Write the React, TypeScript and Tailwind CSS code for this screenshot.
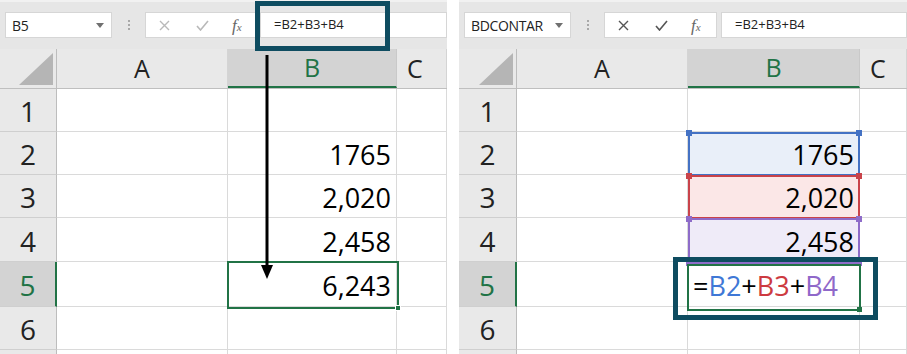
const FONT = "font-['Open_Sans','Noto_Sans',sans-serif]"

type Row = { n: number; h: string; v: string; label: string }

const rows: Row[] = [
  { n: 1, h: 'h-[43px]', v: '', label: '1' },
  { n: 2, h: 'h-[43px]', v: '1765', label: '2' },
  { n: 3, h: 'h-[43px]', v: '2,020', label: '3' },
  { n: 4, h: 'h-[44px]', v: '2,458', label: '4' },
  { n: 5, h: 'h-[45px]', v: '6,243', label: '5' },
  { n: 6, h: 'h-[43px]', v: '', label: '6' },
  // row 7 is only a sliver at the bottom edge
  { n: 7, h: 'h-[43px]', v: '', label: '' },
]

// fill colours of the referenced ranges (right panel only)
const rangeFill: Record<number, string> = {
  2: 'bg-[#e9eff9]',
  3: 'bg-[#fbe7e7]',
  4: 'bg-[#efebf8]',
}

function FormulaBar({ name, editing, nameW, btnW }: { name: string; editing: boolean; nameW: string; btnW: string }) {
  const iconColor = editing ? '#555555' : '#b9b9b9'
  return (
    <div className="h-[49px] bg-[#e6e6e6] border-t-2 border-[#f1f1f1] flex items-start pt-[10px] pl-[5px]">
      {/* name box */}
      <div className={`${nameW} h-[26px] bg-white border border-[#d6d6d6] flex items-center justify-between pl-[6px] pr-[7px]`}>
        <span className="text-[14px] text-[#222] tracking-tight">{name}</span>
        <svg width="8" height="5" viewBox="0 0 8 5">
          <polygon points="0,0 8,0 4,5" fill="#707070" />
        </svg>
      </div>
      <div className="w-[33px] h-[26px] flex flex-col items-center justify-center gap-[2px]">
        <div className="w-[2px] h-[2px] bg-[#a8a8a8]" />
        <div className="w-[2px] h-[2px] bg-[#a8a8a8]" />
        <div className="w-[2px] h-[2px] bg-[#a8a8a8]" />
      </div>
      {/* cancel / enter / fx */}
      <div className={`${btnW} h-[26px] bg-white border border-[#d6d6d6] flex items-center`}>
        <svg className="ml-[13px]" width="11" height="11" viewBox="0 0 11 11">
          <path d="M1 1 L10 10 M10 1 L1 10" stroke={iconColor} strokeWidth="1.4" />
        </svg>
        <svg className="ml-[26px]" width="13" height="11" viewBox="0 0 13 11">
          <path d="M1 6 L4.5 10 L12 1" stroke={iconColor} strokeWidth="1.6" fill="none" />
        </svg>
        <span className="ml-[23px] font-['Liberation_Serif',serif] italic text-[17px] text-[#666] leading-none">
          f<span className="text-[11px]">x</span>
        </span>
      </div>
      <div className="flex-1 h-[26px] bg-white border border-[#d6d6d6] ml-[4px] flex items-center pl-[13px]">
        <span className="text-[13px] text-[#222]">=B2+B3+B4</span>
      </div>
    </div>
  )
}

function Sheet({ right }: { right: boolean }) {
  const hw = right ? 'w-[58px]' : 'w-[57px]'
  const bw = right ? 'w-[172px]' : 'w-[169px]'
  return (
    <div>
      {/* column headers */}
      <div className="h-[40px] flex border-b border-[#bfbfbf] bg-[#e9e9e9] text-[25px] text-[#222]">
        <div className={`${hw} shrink-0 border-r border-[#bdbdbd] flex items-end justify-end pr-[3px] pb-[3px]`}>
          <svg width="34" height="32" viewBox="0 0 34 32">
            <polygon points="34,0 34,32 0,32" fill="#b5b5b5" />
          </svg>
        </div>
        <div className="w-[171px] shrink-0 border-r border-[#d4d4d4] flex items-center justify-center">A</div>
        <div className={`${bw} shrink-0 bg-[#d3d3d3] border-b-2 border-[#217346] border-r border-r-[#c9c9c9] flex items-center justify-center text-[#217346]`}>
          B
        </div>
        <div className="flex-1 border-r border-[#d4d4d4] flex items-center pl-[10px]">C</div>
      </div>
      {rows.map(r => {
        const sel = r.n === 5
        return (
          <div key={r.n} className={`${r.h} flex`}>
            <div
              className={`${hw} shrink-0 border-b border-[#cfcfcf] flex items-center justify-center pt-[2px] text-[28px] leading-none ${
                sel ? 'bg-[#d3d3d3] text-[#217346] border-r-2 border-r-[#217346]' : 'bg-[#e9e9e9] text-[#222] border-r border-r-[#bdbdbd]'
              }`}
            >
              {r.label}
            </div>
            <div className="w-[171px] shrink-0 border-r border-b border-[#dadada]" />
            <div
              className={`${bw} shrink-0 border-r border-b border-[#dadada] flex items-center text-[27px] leading-none text-black pt-[3px] ${
                right && rangeFill[r.n] ? rangeFill[r.n] : ''
              } ${right && sel ? 'justify-start pl-[5px]' : 'justify-end pr-[5px]'}`}
            >
              {right && sel ? (
                <span>
                  =<span className="text-[#3f78d6]">B2</span>+<span className="text-[#cd3a40]">B3</span>+
                  <span className="text-[#8f68c9]">B4</span>
                </span>
              ) : right && !rangeFill[r.n] ? null : (
                r.v
              )}
            </div>
            <div className="flex-1 border-r border-b border-[#dadada]" />
          </div>
        )
      })}
    </div>
  )
}

function Handle({ cls, color }: { cls: string; color: string }) {
  return <div className={`absolute w-[6px] h-[6px] ${cls} ${color}`} />
}

function LeftPanel() {
  return (
    <div className="relative w-[447px] shrink-0 overflow-hidden">
      <FormulaBar name="B5" editing={false} nameW="w-[107px]" btnW="w-[111px]" />
      <Sheet right={false} />

      {/* active cell */}
      <div className="absolute left-[227px] top-[261px] w-[172px] h-[48px] border-2 border-[#217346]">
        <div className="absolute -right-[4px] -bottom-[4px] w-[6px] h-[6px] bg-[#217346] border border-white" />
      </div>

      {/* arrow from formula bar to cell */}
      <svg className="absolute left-[261px] top-[55px]" width="12" height="224" viewBox="0 0 12 224">
        <line x1="6" y1="0" x2="6" y2="212" stroke="#000" strokeWidth="3" />
        <polygon points="0,210 12,210 6,224" fill="#000" />
      </svg>

      {/* highlight */}
      <div className="absolute left-[255px] top-[1px] w-[135px] h-[50px] border-[5px] border-[#0e4c60]" />
    </div>
  )
}

function RightPanel() {
  return (
    <div className="relative flex-1 overflow-hidden">
      <FormulaBar name="BDCONTAR" editing={true} nameW="w-[107px]" btnW="w-[113px]" />
      <Sheet right={true} />

      {/* referenced ranges */}
      <div className="absolute left-[229px] top-[132px] w-[172px] h-[44px] border-2 border-[#4472c4]">
        <Handle cls="-left-[4px] -top-[4px]" color="bg-[#4472c4]" />
        <Handle cls="-right-[4px] -top-[4px]" color="bg-[#4472c4]" />
      </div>
      <div className="absolute left-[229px] top-[175px] w-[172px] h-[44px] border-2 border-[#c9434a]">
        <Handle cls="-left-[4px] -top-[4px]" color="bg-[#c9434a]" />
        <Handle cls="-right-[4px] -top-[4px]" color="bg-[#c9434a]" />
      </div>
      <div className="absolute left-[229px] top-[218px] w-[172px] h-[46px] border-2 border-[#8e6cc9]">
        <Handle cls="-left-[4px] -top-[4px]" color="bg-[#8e6cc9]" />
        <Handle cls="-right-[4px] -top-[4px]" color="bg-[#8e6cc9]" />
        <Handle cls="-left-[4px] -bottom-[4px]" color="bg-[#8e6cc9]" />
        <Handle cls="-right-[4px] -bottom-[4px]" color="bg-[#8e6cc9]" />
      </div>

      {/* active cell in edit mode */}
      <div className="absolute left-[228px] top-[264px] w-[174px] h-[47px] border-2 border-[#217346]">
        <div className="absolute -right-[3px] -bottom-[3px] w-[5px] h-[5px] bg-[#217346]" />
      </div>

      {/* highlight */}
      <div className="absolute left-[214px] top-[257px] w-[205px] h-[63px] border-[5px] border-[#0e4c60]" />
    </div>
  )
}

export default function App() {
  return (
    <div className={`${FONT} w-[907px] h-[354px] overflow-hidden bg-white flex gap-[12px]`}>
      <LeftPanel />
      <RightPanel />
    </div>
  )
}
